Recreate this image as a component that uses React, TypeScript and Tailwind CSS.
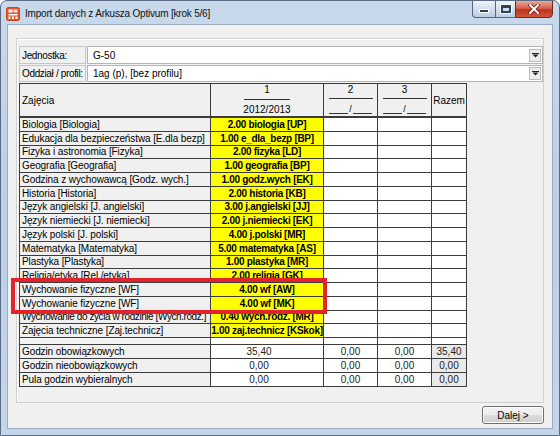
import React from "react";

const rows: [string, string, string][] = [
  ["Biologia [Biologia]", "2.00 biologia [UP]", ""],
  ["Edukacja dla bezpieczeństwa [E.dla bezp]", "1.00 e_dla_bezp [BP]", ""],
  ["Fizyka i astronomia [Fizyka]", "2.00 fizyka [LD]", ""],
  ["Geografia [Geografia]", "1.00 geografia [BP]", ""],
  ["Godzina z wychowawcą [Godz. wych.]", "1.00 godz.wych [EK]", ""],
  ["Historia [Historia]", "2.00 historia [KB]", ""],
  ["Język angielski [J. angielski]", "3.00 j.angielski [JJ]", ""],
  ["Język niemiecki [J. niemiecki]", "2.00 j.niemiecki [EK]", ""],
  ["Język polski [J. polski]", "4.00 j.polski [MR]", ""],
  ["Matematyka [Matematyka]", "5.00 matematyka [AS]", ""],
  ["Plastyka [Plastyka]", "1.00 plastyka [MR]", ""],
  ["Religia/etyka [Rel./etyka]", "2.00 religia [GK]", ""],
  ["Wychowanie fizyczne [WF]", "4.00 wf [AW]", ""],
  ["Wychowanie fizyczne [WF]", "4.00 wf [MK]", ""],
  ["Wychowanie do życia w rodzinie [Wych.rodz.]", "0.40 wych.rodz. [MR]", "tight"],
  ["Zajęcia techniczne [Zaj.technicz]", "1.00 zaj.technicz [KSkok]", ""],
];

const summary: [string, string, string, string, string][] = [
  ["Godzin obowiązkowych", "35,40", "0,00", "0,00", "35,40"],
  ["Godzin nieobowiązkowych", "0,00", "0,00", "0,00", "0,00"],
  ["Pula godzin wybieralnych", "0,00", "0,00", "0,00", "0,00"],
];

function Combo({ label, value }: { label: string; value: string }) {
  return (
    <div className="flex gap-px">
      <div className="w-[67px] border border-[#c6c6c6] bg-[#f0f0f0] pl-[2px] flex items-center whitespace-nowrap overflow-hidden tracking-[-0.35px]">
        {label}
      </div>
      <div className="w-[456px] border border-[#b4b4b4] bg-white flex items-center pl-[5px] pr-px">
        <span className="whitespace-nowrap">{value}</span>
        <div className="ml-auto w-[12px] h-[13px] border border-[#bdbdbd] bg-[#ececec] flex items-center justify-center">
          <svg width="7" height="5" viewBox="0 0 7 5">
            <rect x="0" y="0" width="7" height="1" fill="#222" />
            <path d="M0.5 1.5 L6.5 1.5 L3.5 4.5 Z" fill="#222" />
          </svg>
        </div>
      </div>
    </div>
  );
}

export default function App() {
  return (
    <div className="relative w-[560px] h-[436px] flex flex-col overflow-hidden rounded-t-[7px] border border-[#5b6d84] bg-[linear-gradient(to_bottom,#c9d9ec,#bccfe6_45%,#c4d5ea)] [font-family:'Liberation_Sans',Arial,sans-serif] text-[10px] text-black">
      {/* Title bar */}
      <div className="h-[23px] flex shrink-0">
        <div className="flex items-center pl-[5px] pt-[2px]">
          <svg width="14" height="14" viewBox="0 0 14 14">
            <rect x="0.5" y="0.5" width="13" height="13" rx="2" fill="#e5582c" stroke="#c8441a" />
            <rect x="2.5" y="2.5" width="4" height="3" fill="#fff" />
            <rect x="7.5" y="2.5" width="4" height="3" fill="#fff" opacity="0.85" />
            <rect x="2.5" y="7" width="9" height="1.5" fill="#fff" />
            <rect x="2.5" y="9.5" width="2" height="2.5" fill="#fff" />
            <rect x="6" y="9.5" width="2" height="2.5" fill="#fff" />
            <rect x="9.5" y="9.5" width="2" height="2.5" fill="#fff" />
          </svg>
          <span className="ml-[5px] tracking-[-0.2px] text-[#111]">Import danych z Arkusza Optivum [krok 5/6]</span>
        </div>
        <div className="ml-auto mr-[6px] -mt-px flex h-[18px]">
          <div className="w-[23px] h-full border border-[#55687f] border-r-0 rounded-bl-[4px] bg-[linear-gradient(to_bottom,#eef3f9,#d3e0ef_50%,#bccde3)] flex items-end justify-center pb-[4px]">
            <div className="w-[10px] h-[4px] bg-[#2f4259] border border-white" />
          </div>
          <div className="w-[20px] h-full border border-[#55687f] border-r-0 bg-[linear-gradient(to_bottom,#eef3f9,#d3e0ef_50%,#bccde3)] flex items-center justify-center">
            <div className="w-[10px] h-[8px] border-[2px] border-t-[3px] border-[#2f4259] ring-1 ring-white" />
          </div>
          <div className="w-[38px] h-full border border-[#6e2a20] rounded-br-[4px] bg-[linear-gradient(to_bottom,#e9a898,#d4624d_45%,#c0321f_55%,#d0563a)] flex items-center justify-center">
            <svg width="12" height="10" viewBox="0 0 12 10">
              <path d="M2 1 L10 9 M10 1 L2 9" stroke="#5a1a12" strokeWidth="3.4" strokeLinecap="square" />
              <path d="M2 1 L10 9 M10 1 L2 9" stroke="#fff" strokeWidth="2" strokeLinecap="square" />
            </svg>
          </div>
        </div>
      </div>

      {/* Client area */}
      <div className="mx-[6px] h-[405px] shrink-0 border border-[#9aabbf] bg-[#f0f0f0] flex flex-col">
        <div className="ml-[8px] mt-[13px] w-[528px] h-[365px] border border-[#d0d0d0] shadow-[inset_1px_1px_0_#ffffff] flex flex-col pl-[2px] pt-[7px]">
          <div className="h-[18px] flex">
            <Combo label="Jednostka:" value="G-50" />
          </div>
          <div className="h-[17px] mt-px flex">
            <Combo label="Oddział / profil:" value="1ag (p), [bez profilu]" />
          </div>
          <div className="mt-px w-[448px] grid grid-cols-[190px_112px_53px_53px_34px] grid-rows-[33px_repeat(16,12.75px)_6px_repeat(3,13px)] gap-px p-px bg-[#3c3c3c]">
            {/* header */}
            <div className="bg-[#f0f0f0] border-b border-[#3c3c3c] flex items-center pl-[2px]">Zajęcia</div>
            <div className="bg-[#f0f0f0] border-b border-[#3c3c3c] flex flex-col items-center">
              <div className="leading-[11px]">1</div>
              <div className="mt-[4px] w-[46px] h-px bg-[#333]" />
              <div className="mt-[4px] leading-[11px]">2012/2013</div>
            </div>
            {["2", "3"].map((n) => (
              <div key={n} className="bg-[#f0f0f0] border-b border-[#3c3c3c] flex flex-col items-center">
                <div className="leading-[11px]">{n}</div>
                <div className="mt-[3px] w-[44px] h-px bg-[#333]" />
                <div className="mt-[6px] flex items-end h-[9px]">
                  <span className="w-[19px] h-full border-b border-[#333]" />
                  <span className="text-[9px] leading-[9px] px-[1px]">/</span>
                  <span className="w-[19px] h-full border-b border-[#333]" />
                </div>
              </div>
            ))}
            <div className="bg-[#f0f0f0] border-b border-[#3c3c3c] flex items-center justify-center">Razem</div>

            {/* subject rows */}
            {rows.map(([label, val, tight], i) => (
              <React.Fragment key={i}>
                <div
                  className={
                    tight
                      ? "bg-[#f0f0f0] pl-[2px] flex items-center whitespace-nowrap overflow-hidden tracking-[-0.42px]"
                      : "bg-[#f0f0f0] pl-[2px] flex items-center whitespace-nowrap overflow-hidden tracking-[-0.1px]"
                  }
                >
                  {label}
                </div>
                <div className="bg-[#ffff00] font-bold tracking-[-0.3px] flex items-center justify-center whitespace-nowrap overflow-hidden">{val}</div>
                <div className="bg-white" />
                <div className="bg-white" />
                <div className="bg-white" />
              </React.Fragment>
            ))}

            {/* blank row */}
            <div className="bg-[#f4f4f4]" />
            <div className="bg-white" />
            <div className="bg-white" />
            <div className="bg-white" />
            <div className="bg-white" />

            {/* summary */}
            {summary.map(([label, a, b, c, d], i) => (
              <React.Fragment key={"s" + i}>
                <div className="bg-[#f0f0f0] pl-[2px] flex items-center whitespace-nowrap tracking-[-0.1px]">{label}</div>
                <div className="bg-white flex items-center justify-center pr-[16px] text-[#222]">{a}</div>
                <div className="bg-white flex items-center justify-center text-[#222]">{b}</div>
                <div className="bg-white flex items-center justify-center text-[#222]">{c}</div>
                <div className="bg-[#e9e9e9] flex items-center justify-center text-[#222]">{d}</div>
              </React.Fragment>
            ))}
          </div>
        </div>
        <div className="mt-[3px] ml-auto mr-[8px] w-[62px] h-[18px] border border-[#707070] rounded-[3px] bg-[linear-gradient(to_bottom,#f4f4f4,#ebebeb_50%,#dddddd_51%,#cfcfcf)] shadow-[inset_0_0_0_1px_#fbfbfb] flex items-center justify-center">
          Dalej &gt;
        </div>
      </div>

      {/* red highlight */}
      <div className="absolute left-[10px] top-[277px] w-[316px] h-[36px] border-[4px] border-[#e3232c] pointer-events-none" />
    </div>
  );
}
